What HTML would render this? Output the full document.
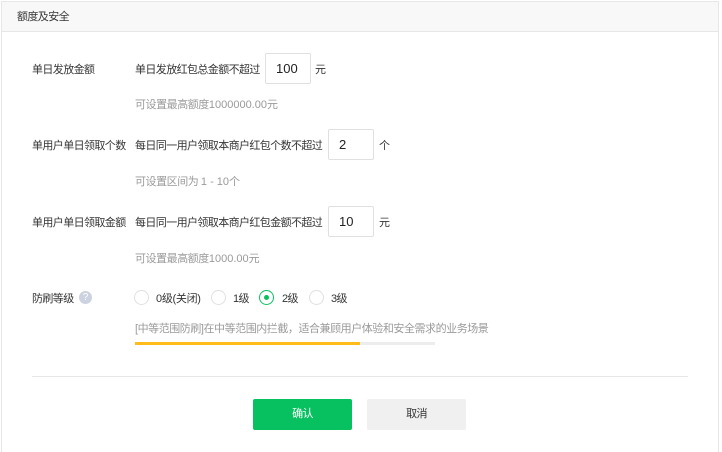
<!DOCTYPE html>
<html><head><meta charset="utf-8"><style>
*{margin:0;padding:0;box-sizing:border-box}
html,body{width:722px;height:452px;overflow:hidden}
body{background:#fff;font-family:"Liberation Sans","Noto Sans CJK SC",sans-serif;font-size:11px;letter-spacing:-0.6px;color:#353535;position:relative}
.box{position:absolute;left:1px;top:1px;width:718px;height:455px;border:1px solid #e7e7e7}
.hd{position:absolute;left:0;top:0;right:0;height:30px;background:#f8f8f8;border-bottom:1px solid #e7e7e7;padding-left:15px;line-height:30px}
.a{position:absolute;white-space:nowrap}
.t{color:#9a9a9a;letter-spacing:-0.45px}
.in{position:absolute;width:46px;height:31px;border:1px solid #e0e0e0;border-radius:2px;line-height:29px;padding-left:10px;font-size:13px;letter-spacing:0;color:#222}
.r{position:absolute;width:15px;height:15px;border:1px solid #e0e0e0;border-radius:50%}
.btn{position:absolute;top:399px;width:99px;height:31px;border-radius:2px;line-height:31px;text-align:center}
.n{letter-spacing:0}
</style></head><body>
<div class="box"><div class="hd">额度及安全</div></div>
<div class="a" style="left:32px;top:61px">单日发放金额</div>
<div class="a" style="left:135px;top:61px">单日发放红包总金额不超过</div>
<div class="in" style="left:265px;top:53px">100</div>
<div class="a" style="left:315px;top:61px">元</div>
<div class="a t" style="left:135px;top:96px">可设置最高额度<span class="n">1000000.00</span>元</div>

<div class="a" style="left:32px;top:137px">单用户单日领取个数</div>
<div class="a" style="left:135px;top:137px">每日同一用户领取本商户红包个数不超过</div>
<div class="in" style="left:328px;top:129px">2</div>
<div class="a" style="left:379px;top:137px">个</div>
<div class="a t" style="left:135px;top:173px">可设置区间为 <span class="n">1 - 10</span>个</div>

<div class="a" style="left:32px;top:214px">单用户单日领取金额</div>
<div class="a" style="left:135px;top:214px">每日同一用户领取本商户红包金额不超过</div>
<div class="in" style="left:328px;top:206px">10</div>
<div class="a" style="left:379px;top:214px">元</div>
<div class="a t" style="left:135px;top:250px">可设置最高额度<span class="n">1000.00</span>元</div>

<div class="a" style="left:32px;top:290px">防刷等级</div>
<div class="a" style="left:79px;top:291px;width:13px;height:13px;border-radius:50%;background:#ccd2e0;color:#fff;font-size:10px;letter-spacing:0;text-align:center;line-height:13px">?</div>
<div class="r" style="left:134px;top:290px"></div>
<div class="a" style="left:156px;top:290px;letter-spacing:-0.3px">0级(关闭)</div>
<div class="r" style="left:211px;top:290px"></div>
<div class="a" style="left:233px;top:290px">1级</div>
<div class="r" style="left:259px;top:290px;border-color:#07c160"><div style="position:absolute;left:4px;top:4px;width:5px;height:5px;border-radius:50%;background:#07c160"></div></div>
<div class="a" style="left:282px;top:290px">2级</div>
<div class="r" style="left:309px;top:290px"></div>
<div class="a" style="left:331px;top:290px">3级</div>
<div class="a t" style="left:135px;top:320px">[中等范围防刷]在中等范围内拦截，适合兼顾用户体验和安全需求的业务场景</div>
<div class="a" style="left:135px;top:342px;width:300px;height:3px;background:#ededed"></div>
<div class="a" style="left:135px;top:342px;width:225px;height:3px;background:#ffbc1a"></div>
<div class="a" style="left:32px;top:376px;width:656px;height:1px;background:#e7e7e7"></div>
<div class="btn" style="left:253px;background:#07c160;color:#fff">确认</div>
<div class="btn" style="left:367px;background:#f0f0f0;color:#353535">取消</div>
</body></html>
